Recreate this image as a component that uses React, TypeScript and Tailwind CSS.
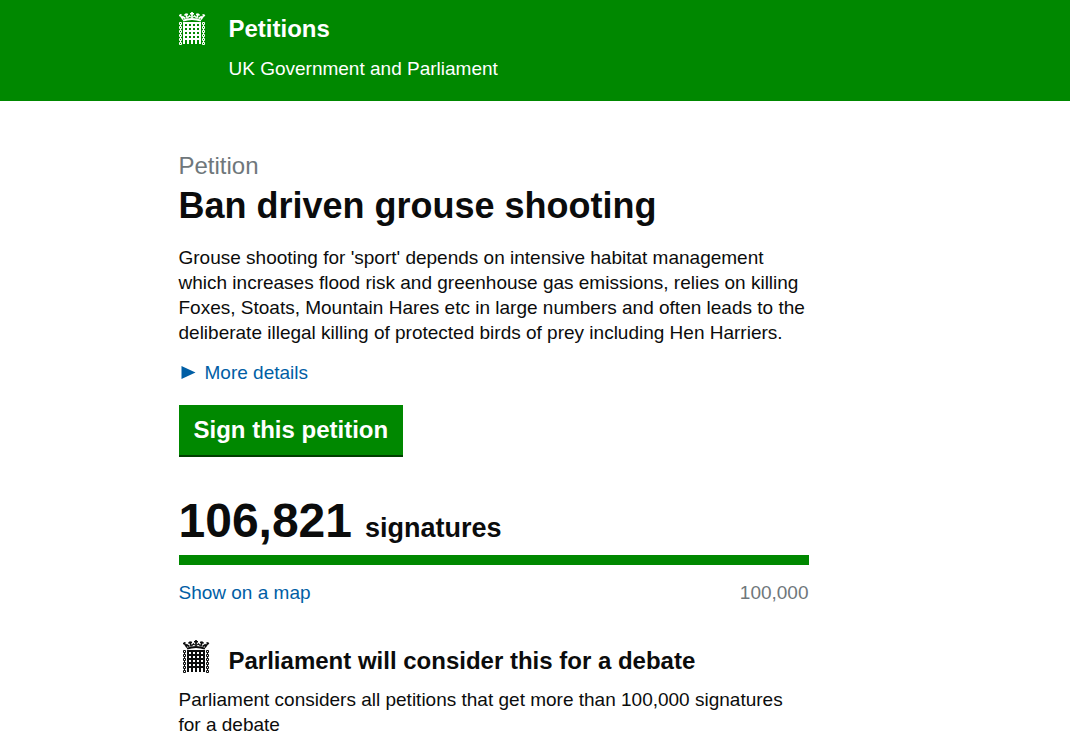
import React from 'react';

const petition = {
  title: 'Ban driven grouse shooting',
  summary:
    "Grouse shooting for 'sport' depends on intensive habitat management which increases flood risk and greenhouse gas emissions, relies on killing Foxes, Stoats, Mountain Hares etc in large numbers and often leads to the deliberate illegal killing of protected birds of prey including Hen Harriers.",
  signatures: 106821,
  threshold: 100000,
};

const gateBars = [5, 9, 13, 17, 21];
const gateRails = [11, 15, 19, 23, 27];
const chainLinks = [10, 14, 18, 22, 26, 30];

/* Crowned portcullis, coloured by currentColor */
function Portcullis() {
  return (
    <svg width="27" height="33" viewBox="0 0 27 33" className="shrink-0" fill="none" stroke="currentColor" aria-hidden="true">
      {/* Crown */}
      <path d="M4 8.6Q13 5.4 22 8.6" strokeWidth="2" />
      <path d="M4 7.5L0.8 2.5M22 7.5L25.4 2.5M6.5 6.5L3.2 4.5M19.5 6.5L22.8 4.5" strokeWidth="1.5" />
      <path d="M8.3 6.5L6.8 1.5M17.7 6.5L19.2 1.5M13 6V0" strokeWidth="1.7" />
      <path d="M5.3 3L9 2.3M17 2.3L20.7 3M11 1.7h4M0 4L2.5 2.5M26 4L23.5 2.5" strokeWidth="1.4" />
      <path d="M9 5.5L10.5 3.8L11.7 5.2M17 5.5L15.5 3.8L14.3 5.2" strokeWidth="1.2" />
      {/* Gate */}
      {gateRails.map((y) => (
        <path key={y} d={`M4 ${y}h18`} strokeWidth="2" />
      ))}
      {gateBars.map((x) => (
        <path key={x} d={`M${x} 10v20M${x} 30v2`} strokeWidth="2" />
      ))}
      {/* Chains */}
      {chainLinks.map((y) => (
        <path key={y} d={`M.5 ${y + 0.5}h2v2h-2zM23.5 ${y + 0.5}h2v2h-2z`} strokeWidth="1" />
      ))}
      <path d="M1.5 13v1m0 3v1m0 3v1m0 3v1m0 3v1M24.5 13v1m0 3v1m0 3v1m0 3v1m0 3v1" />
    </svg>
  );
}

function Header() {
  return (
    <header className="bg-[#008800] text-white">
      <div className="mx-auto flex max-w-[713px] gap-[23px] pt-3 pb-5">
        <Portcullis />
        <div className="pt-0.5">
          <a href="#" className="block text-2xl leading-[30px] font-bold">
            Petitions
          </a>
          <p className="mt-3 leading-[25px]">UK Government and Parliament</p>
        </div>
      </div>
    </header>
  );
}

export default function App() {
  const progress = Math.min(100, (petition.signatures / petition.threshold) * 100);

  return (
    <div className="min-h-screen bg-white font-['Liberation_Sans',Arial,sans-serif] text-[19px] leading-[25px] text-[#0b0c0c]">
      <Header />

      <main className="mx-auto max-w-[713px] pt-[50px]">
        <div className="max-w-[630px]">
          <h1 className="text-4xl leading-10 font-bold">
            <span className="block text-2xl leading-[30px] font-normal text-[#6f777b]">Petition</span>
            <span className="mt-[5px] block">{petition.title}</span>
          </h1>

          <p className="mt-[19px]">{petition.summary}</p>

          <details className="mt-[15px]">
            <summary className="flex w-fit cursor-pointer list-none items-center gap-2 text-[#005ea5]">
              <svg width="18" height="14" viewBox="0 0 18 14" fill="currentColor" aria-hidden="true">
                <path d="M2.5 0v13L16.5 6.5z" />
              </svg>
              More details
            </summary>
          </details>

          <button
            type="button"
            className="mt-5 block border-b-2 border-[#003f00] bg-[#008800] px-[15px] py-2.5 text-2xl leading-[30px] font-bold text-white"
          >
            Sign this petition
          </button>

          {/* Signature count */}
          <section className="mt-[39px]">
            <p className="flex items-baseline gap-[13px] font-bold">
              <span className="text-5xl leading-[50px]">{petition.signatures.toLocaleString('en-GB')}</span>
              <span className="text-[27px]">signatures</span>
            </p>
            <div className="mt-[9px] h-[10px] bg-[#dee0e2]">
              <div className="h-full bg-[#008800]" style={{ width: `${progress}%` }} />
            </div>
            <div className="mt-[15px] flex justify-between">
              <a href="#" className="text-[#005ea5]">
                Show on a map
              </a>
              <span className="text-[#6f777b]">{petition.threshold.toLocaleString('en-GB')}</span>
            </div>
          </section>

          {/* Debate status */}
          <section className="mt-[35px] pb-3">
            <h2 className="flex gap-[19px] pl-1 text-2xl leading-[30px] font-bold">
              <Portcullis />
              <span className="pt-[6px]">Parliament will consider this for a debate</span>
            </h2>
            <p className="mt-[11px]">
              Parliament considers all petitions that get more than 100,000 signatures for a debate
            </p>
          </section>
        </div>
      </main>
    </div>
  );
}
